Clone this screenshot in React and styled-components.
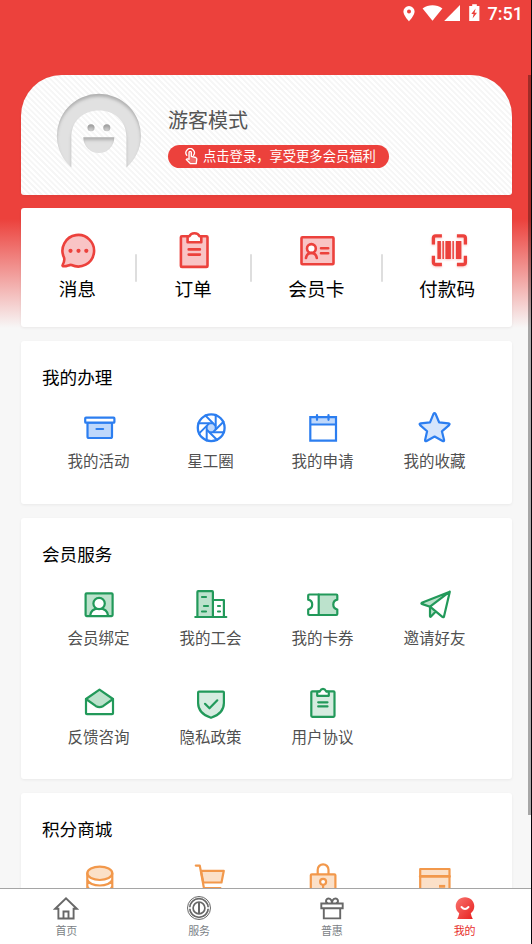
import React from 'react';
import styled, { createGlobalStyle } from 'styled-components';

const RED = '#ec413c';
const PINK = '#f9c4c5';
const BLUE = '#2c7ef0';
const GREEN = '#22995a';
const ORANGE = '#f2984b';

const QUICK_DATA = [
  { title: '消息', icon: <MessageIcon /> },
  { title: '订单', icon: <OrderIcon /> },
  { title: '会员卡', icon: <MemberCardIcon /> },
  { title: '付款码', icon: <PayCodeIcon /> },
];

const SECTION_DATA = [
  {
    title: '我的办理',
    color: BLUE,
    height: 163,
    items: [
      { title: '我的活动', icon: <BoxIcon /> },
      { title: '星工圈', icon: <ApertureIcon /> },
      { title: '我的申请', icon: <CalendarIcon /> },
      { title: '我的收藏', icon: <StarIcon /> },
    ],
  },
  {
    title: '会员服务',
    color: GREEN,
    height: 261.4,
    items: [
      { title: '会员绑定', icon: <PortraitIcon /> },
      { title: '我的工会', icon: <BuildingIcon /> },
      { title: '我的卡券', icon: <TicketIcon /> },
      { title: '邀请好友', icon: <PlaneIcon /> },
      { title: '反馈咨询', icon: <MailIcon /> },
      { title: '隐私政策', icon: <ShieldIcon /> },
      { title: '用户协议', icon: <ClipboardIcon /> },
    ],
  },
  {
    title: '积分商城',
    color: ORANGE,
    height: 163,
    items: [
      { title: '', icon: <CoinsIcon /> },
      { title: '', icon: <CartIcon /> },
      { title: '', icon: <LockIcon /> },
      { title: '', icon: <WalletIcon /> },
    ],
  },
];

const TAB_DATA = [
  { title: '首页', icon: <HomeIcon /> },
  { title: '服务', icon: <ServiceIcon /> },
  { title: '普惠', icon: <GiftIcon /> },
  { title: '我的', icon: <MineIcon />, active: true },
];

export default function App() {
  return (
    <Screen>
      <GlobalStyle />
      <StatusBar>
        <StatusIcons />
        <Clock>7:51</Clock>
      </StatusBar>
      <Content>
        <ProfileCard>
          <Avatar />
          <ProfileInfo>
            <UserName>游客模式</UserName>
            <LoginButton>
              <TapIcon />
              <LoginText>点击登录，享受更多会员福利</LoginText>
            </LoginButton>
          </ProfileInfo>
        </ProfileCard>
        <QuickCard>
          {QUICK_DATA.map((item, i) => (
            <React.Fragment key={item.title}>
              {i > 0 && <Divider />}
              <QuickItem>
                {item.icon}
                <QuickLabel>{item.title}</QuickLabel>
              </QuickItem>
            </React.Fragment>
          ))}
        </QuickCard>
        {SECTION_DATA.map((section) => (
          <SectionCard key={section.title} $height={section.height}>
            <SectionTitle>{section.title}</SectionTitle>
            <ItemGrid $color={section.color}>
              {section.items.map((item, i) => (
                <GridItem key={i}>
                  {item.icon}
                  <ItemLabel>{item.title}</ItemLabel>
                </GridItem>
              ))}
            </ItemGrid>
          </SectionCard>
        ))}
      </Content>
      <ScrollThumb />
      <TabBar>
        {TAB_DATA.map((tab) => (
          <Tab key={tab.title} $active={tab.active}>
            {tab.icon}
            <TabLabel>{tab.title}</TabLabel>
          </Tab>
        ))}
      </TabBar>
    </Screen>
  );
}

function StatusIcons() {
  return (
    <svg width="82" height="20" viewBox="402 3 82 20" fill="#fff">
      <path fillRule="evenodd" d="M409 6a5.6 5.6 0 0 0-5.6 5.6c0 4 5.6 9.8 5.6 9.8s5.6-5.8 5.6-9.8A5.6 5.6 0 0 0 409 6zm0 3.6a2 2 0 1 1 0 4 2 2 0 0 1 0-4z" />
      <path d="M422.6 8.6c5.7-4.4 14.1-4.4 19.8 0L432.5 20.8z" />
      <path d="M444.2 21L460 5v16z" />
      <path fillRule="evenodd" d="M472.2 4.3h4.6V6h2.6v15h-10.2V6h3zM475.6 8.5l-4.3 5.5h2.3l-1 4.5 4.4-5.8h-2.4z" />
    </svg>
  );
}

function Avatar() {
  return (
    <AvatarSvg viewBox="0 0 88 80">
      <defs>
        <filter id="inset" x="-10%" y="-10%" width="120%" height="120%">
          <feOffset in="SourceAlpha" dy="2.5" />
          <feGaussianBlur stdDeviation="1.8" result="b" />
          <feComposite in="SourceAlpha" in2="b" operator="out" result="s" />
          <feFlood floodColor="#000" floodOpacity=".42" />
          <feComposite in2="s" operator="in" result="sh" />
          <feMerge>
            <feMergeNode in="SourceGraphic" />
            <feMergeNode in="sh" />
          </feMerge>
        </filter>
      </defs>
      <g fill="#e1e1e1" filter="url(#inset)">
        <path d="M16.3 75.500A42 42 0 1 1 71.500 75.500V45C71.200 28 59 18.500 44 18.500S16.500 28 16.300 45Z" />
        <circle cx="36" cy="35.700" r="3.500" fill="#ccc" />
        <circle cx="51.800" cy="35.700" r="3.500" fill="#ccc" />
        <path d="M28.300 45.300h31a15.500 15.800 0 0 1-31 0z" />
      </g>
    </AvatarSvg>
  );
}

function TapIcon() {
  return (
    <svg width="15" height="17" viewBox="0 0 15 17" fill="none" stroke="#fff" strokeWidth="1.3" strokeLinejoin="round" strokeLinecap="round">
      <path d="M2.800 7.300a4.200 4.200 0 1 1 6.700 0" />
      <path d="M5 10.500V4.600a1.200 1.200 0 0 1 2.400 0v3.700l4.300 1.200c.9.300 1.200.9 1.100 1.700l-.6 4.500H6.500L2.300 11.600c.5-1 1.500-1 2.700-.3z" fill="rgba(255,255,255,.25)" />
    </svg>
  );
}

function MessageIcon() {
  return (
    <QuickSvg viewBox="0 0 42 42">
      <path d="M7 27.500A15.800 15.800 0 1 1 14.500 35C12.500 34.300 9.500 37 6 36.200c-.6-.2-.6-.8-.3-1.300C7 32.500 7.800 30 7 27.500z" fill={PINK} />
      <g fill={RED} stroke="none">
        <circle cx="13.500" cy="20.800" r="2.100" />
        <circle cx="21.500" cy="20.800" r="2.100" />
        <circle cx="29.300" cy="20.800" r="2.100" />
      </g>
    </QuickSvg>
  );
}

function OrderIcon() {
  return (
    <QuickSvg viewBox="0 0 42 42">
      <rect x="7.900" y="6.300" width="26.600" height="30.600" rx="1" fill={PINK} />
      <path d="M14.600 6.300h1.800c1.600-4 8.500-4 10.100 0h1.800v5.900H14.600z" fill="#fff" />
      <path d="M15.700 19.400h11.200M15.700 24.600h11.200" />
    </QuickSvg>
  );
}

function MemberCardIcon() {
  return (
    <QuickSvg viewBox="0.800 0 42 42">
      <rect x="6.300" y="7.300" width="32" height="27" rx="1" fill={PINK} />
      <circle cx="16.200" cy="18.500" r="4.400" fill="#fff" />
      <path d="M10.800 28c.5-3.200 2-5 5.400-5s4.900 1.800 5.400 5M25.800 18.200h7.200M25.800 23.300h7.200" />
    </QuickSvg>
  );
}

function PayCodeIcon() {
  return (
    <QuickSvg viewBox="0.600 0 42 42" $shadow>
      <path d="M15.500 5.800H9.200Q7 5.800 7 8v6.500M30.500 5.800h6.300Q39 5.800 39 8v6.500M15.500 34.500H9.200Q7 34.500 7 32.300v-6.500M30.500 34.500h6.300q2.200 0 2.200-2.200v-6.500" strokeWidth="3.300" strokeLinecap="butt" />
      <path d="M11 11h3.500v18H11zM16 11h1.500v18H16zM19 11h5.500v18H19zM26 11h1.500v18H26zM29.500 11H35v18h-5.500z" fill={RED} stroke="none" />
    </QuickSvg>
  );
}

function BoxIcon() {
  return (
    <ItemSvg viewBox="0 0 36 36">
      <path d="M6.500 13.500v14q0 1.500 1.500 1.500h21.500q1.500 0 1.500-1.500v-14z" fill="#bfd8fb" />
      <rect x="4.200" y="8.700" width="29.200" height="5" rx=".8" fill="#fff" />
      <path d="M15.500 20h6.600" />
    </ItemSvg>
  );
}

function ApertureIcon() {
  return (
    <ItemSvg viewBox="0 0 36 36">
      <circle cx="18.200" cy="18.700" r="13.400" strokeWidth="2.300" />
      <circle cx="18.200" cy="18.700" r="4" fill="#bfd8fb" stroke="none" />
      {[0, 45, 90, 135, 180, 225, 270, 315].map((deg) => (
        <path key={deg} d="M22.700 5.800V20" transform={`rotate(${deg} 18.200 18.700)`} strokeWidth="2" />
      ))}
    </ItemSvg>
  );
}

function CalendarIcon() {
  return (
    <ItemSvg viewBox="0 0 36 36">
      <path d="M5.300 8.200h25.700v7.300H5.300z" fill="#bfd8fb" stroke="none" />
      <path d="M5.300 8.200h25.700v23.500H5.300zM5.300 15.500h25.700M12 6v4.800M23.500 6v4.800" strokeLinejoin="miter" />
    </ItemSvg>
  );
}

function StarIcon() {
  return (
    <ItemSvg viewBox="0 0 36 36">
      <path d="M16.500 4.800q1-1.600 2 0l3.600 8.500 9.300 1q2 .4.700 1.800l-7.200 6.200 2.200 8.700q.2 1.800-1.500 1l-8-4.500-8 4.500q-1.700.8-1.500-1l2-8.700-7-6.200q-1.300-1.400.7-1.800l9.200-1z" fill="#d5e5fc" />
    </ItemSvg>
  );
}

function PortraitIcon() {
  return (
    <ItemSvg viewBox="0 0 36 36">
      <rect x="4.600" y="7.300" width="27" height="22.800" rx="1" fill="#bce2cc" />
      <path d="M9 30c.5-5 3.500-7.700 9.100-7.700s8.600 2.700 9.100 7.700z" fill="#fff" />
      <circle cx="18.100" cy="17.500" r="5.700" fill="#fff" />
    </ItemSvg>
  );
}

function BuildingIcon() {
  return (
    <ItemSvg viewBox="0 0 36 36">
      <rect x="4.400" y="5.200" width="15.500" height="25.800" rx=".8" fill="#bce2cc" />
      <path d="M19.900 14h11v17M2.300 31h31M9 11h4M11 20h4M9 25.500h4M25 20h2M25 25.500h2" />
    </ItemSvg>
  );
}

function TicketIcon() {
  return (
    <ItemSvg viewBox="0 0 36 36">
      <path d="M13.700 8.500h17.600q1 0 1 1v4.200a5 5 0 0 0 0 9.800v4.500q0 1-1 1H13.700z" fill="#bce2cc" />
      <path d="M13.700 8.500H4.200q-1 0-1 1v4.200a5 5 0 0 1 0 9.800v4.500q0 1 1 1h9.500" />
    </ItemSvg>
  );
}

function PlaneIcon() {
  return (
    <ItemSvg viewBox="0 0 36 36">
      <path d="M32.800 5.500L4.500 17q-.6.600.3 1l8.200 2.700v9.200q.1 1.600 1 .7l4.400-4.400-5.400-5z" fill="#bce2cc" stroke="none" />
      <path d="M32.800 5.700L4.800 16.800q-.8.600 0 1.100l8.200 2.800v9.300q.2 1.300 1 .5l4.300-4.400M32.800 5.700L13 20.700l12.700 10.400q1 .4 1.300-.5z" />
    </ItemSvg>
  );
}

function MailIcon() {
  return (
    <ItemSvg viewBox="0 0 36 36">
      <path d="M5 14L18.500 4.700 32 14 22 21.200q-3.500 1.800-7 0z" fill="#bce2cc" />
      <path d="M5 14v14.200q0 1 1 1h25q1 0 1-1V14" />
    </ItemSvg>
  );
}

function ShieldIcon() {
  return (
    <ItemSvg viewBox="0 0 36 36">
      <path d="M6 6.700h24q.9 0 .9.900V18q0 10.500-12.900 14.800Q5.100 28.500 5.100 18V7.600q0-.9.900-.9z" fill="#d6ece0" />
      <path d="M12 18.800l4.500 4.500 7.800-8" />
    </ItemSvg>
  );
}

function ClipboardIcon() {
  return (
    <ItemSvg viewBox="0 0 36 36">
      <rect x="6.300" y="6.300" width="23.200" height="25.500" rx="1" fill="#d6ece0" />
      <path d="M12.200 10.800V7.700q0-1 1-1h1.300q3.500-5.800 7 0h1.300q1 0 1 1v3.100z" fill="#fff" />
      <path d="M13.200 17.300h9.300M13.200 21.400h9.300" />
    </ItemSvg>
  );
}

function CoinsIcon() {
  return (
    <ItemSvg viewBox="0 0 36 36">
      <ellipse cx="18.800" cy="12.300" rx="12.500" ry="6.700" fill="#fbe0c8" />
      <path d="M6.300 12.300V34M31.300 12.300V34M6.300 18.500c2 8 23 8 25 0M6.300 25c2 8 23 8 25 0" />
    </ItemSvg>
  );
}

function CartIcon() {
  return (
    <ItemSvg viewBox="0 0 36 36">
      <path d="M8 9.800h22.800L28.500 21.500H10.300z" fill="#fbe0c8" />
      <path d="M2.800 4.600h4L10.900 27h16.500" />
    </ItemSvg>
  );
}

function LockIcon() {
  return (
    <ItemSvg viewBox="0 0 36 36">
      <rect x="5.800" y="13.300" width="24.600" height="22" rx="1" fill="#fbe0c8" />
      <path d="M12.700 13V8.700a5.400 5.400 0 0 1 10.800 0V13M18.100 24v6" />
      <circle cx="18.100" cy="20.800" r="3" fill="#fff" />
    </ItemSvg>
  );
}

function WalletIcon() {
  return (
    <ItemSvg viewBox="0 0 36 36">
      <path d="M3.200 8h29.300v28H3.200z" fill="#fbe0c8" />
      <path d="M3.200 15.400h29.300" strokeWidth="2.600" />
      <path d="M22 25.300h6.200" strokeWidth="2.800" strokeLinecap="butt" />
    </ItemSvg>
  );
}

function HomeIcon() {
  return (
    <TabSvg viewBox="0 0 26 26">
      <path d="M2.200 13.700L13 3.300l10.800 10.400h-3.200v9.800H5.400v-9.800zM10.500 23.500v-7h5v7" />
    </TabSvg>
  );
}

function ServiceIcon() {
  return (
    <TabSvg viewBox="0 0 26 26">
      <circle cx="13" cy="13" r="11.500" strokeWidth="1" />
      <circle cx="13" cy="13" r="9.300" strokeWidth="1.700" />
      <circle cx="13" cy="13" r="5.900" strokeWidth="1.700" />
      <path d="M13 7v12" strokeWidth="2" />
      <path d="M2.500 13H6M20 13h3.500" stroke="#fff" strokeWidth="1.300" />
    </TabSvg>
  );
}

function GiftIcon() {
  return (
    <TabSvg viewBox="0 0 26 26">
      <path d="M2.300 8.500h21.400v4.700H2.300zM4.800 13.200h16.400v10.200H4.800zM13 8.500H9q-2.600-1-1.800-3.500 1.200-2.200 3.700-1.200Q13 5 13 8.500zM13 8.500h4q2.600-1 1.800-3.500-1.200-2.200-3.700-1.200Q13 5 13 8.500z" />
    </TabSvg>
  );
}

function MineIcon() {
  return (
    <TabSvg viewBox="0 0 26 26">
      <defs>
        <linearGradient id="mine" x1="0" y1="0" x2="1" y2="1">
          <stop offset="0" stopColor="#f9736e" />
          <stop offset="1" stopColor="#e7211f" />
        </linearGradient>
      </defs>
      <path d="M13 2.200c5.300 0 9.300 3.900 9.300 9 0 3-1.300 5.300-3.500 7 .3 2 1 4 2 5.800H5.200c1-1.800 1.700-3.800 2-5.800-2.200-1.700-3.500-4-3.500-7 0-5.100 4-9 9.300-9z" fill="url(#mine)" stroke="none" />
      <path d="M9.500 12q3.500 4 7 0" stroke="#fff" strokeLinecap="round" />
    </TabSvg>
  );
}

const GlobalStyle = createGlobalStyle`
  * {
    box-sizing: border-box;
  }

  body {
    margin: 0;
    font-family: 'Noto Sans CJK SC', sans-serif;
    font-weight: 400;
  }
`;

const Screen = styled.div`
  position: relative;
  display: flex;
  flex-direction: column;
  width: 532px;
  height: 944px;
  overflow: hidden;
  border-right: 1px solid #05050a;
  background: linear-gradient(${RED} 219px, #f7f7f7 328px);
`;

const StatusBar = styled.header`
  flex: none;
  display: flex;
  align-items: flex-start;
  justify-content: flex-end;
  gap: 4px;
  height: 75px;
  padding: 3px 8px 0 0;
`;

const Clock = styled.span`
  font: 500 18px/22px Roboto, sans-serif;
  color: #fff;
`;

const Content = styled.main`
  flex: 1;
  min-height: 0;
  overflow: hidden;
  display: flex;
  flex-direction: column;
  gap: 14px;
  padding: 0 19px 0 21px;
`;

const Card = styled.section`
  flex: none;
  background: #fff;
  border-radius: 3px;
  box-shadow: 0 1px 3px rgba(0, 0, 0, 0.06);
`;

const ProfileCard = styled(Card)`
  display: flex;
  height: 119.5px;
  margin-bottom: -0.5px;
  padding: 17px 0 0 34px;
  border-radius: 41px 41px 3px 3px;
  background: repeating-linear-gradient(45deg, #fff 0 1.6px, #f6f6f6 2.2px 3.6px, #fff 4px);
`;

const AvatarSvg = styled.svg`
  width: 88px;
  height: 80px;
`;

const ProfileInfo = styled.div`
  display: flex;
  flex-direction: column;
  align-items: flex-start;
  margin-left: 25px;
  padding-top: 13px;
`;

const UserName = styled.div`
  font-size: 20px;
  line-height: 30px;
  color: #555;
`;

const LoginButton = styled.button`
  display: flex;
  align-items: center;
  gap: 4px;
  width: 221px;
  height: 23px;
  margin-top: 10px;
  padding: 0 0 0 16px;
  border: 0;
  border-radius: 12px;
  background: ${RED};
  color: #fff;
  font: inherit;
`;

const LoginText = styled.span`
  font-size: 13.3px;
  line-height: 20px;
  padding-bottom: 1px;
  white-space: nowrap;
`;

const QuickCard = styled(Card)`
  display: flex;
  justify-content: space-evenly;
  height: 119px;
  padding-top: 22px;
`;

const QuickItem = styled.div`
  display: flex;
  flex-direction: column;
  align-items: center;
`;

const QuickSvg = styled.svg`
  width: 42px;
  height: 42px;
  fill: none;
  stroke: ${RED};
  stroke-width: 2.6;
  stroke-linecap: round;
  stroke-linejoin: round;
  filter: ${({ $shadow }) => ($shadow ? 'drop-shadow(0 1px 1px rgba(236, 65, 60, 0.3))' : 'none')};
`;

const QuickLabel = styled.span`
  margin: 2px 1px 0 0;
  font-size: 18.7px;
  line-height: 28px;
  color: #000;
`;

const Divider = styled.i`
  width: 2px;
  height: 28px;
  margin-top: 24px;
  border-radius: 1px;
  background: #dedede;
`;

const SectionCard = styled(Card)`
  height: ${({ $height }) => $height}px;
  padding: 23px 21px 0 22px;
`;

const SectionTitle = styled.h2`
  margin: 0 0 0 -1px;
  font-size: 17.6px;
  font-weight: inherit;
  line-height: 26px;
  color: #000;
`;

const ItemGrid = styled.div`
  display: grid;
  grid-template-columns: repeat(4, 112px);
  grid-auto-rows: 98.6px;
  margin-top: 19px;
  color: ${({ $color }) => $color};
`;

const GridItem = styled.div`
  display: flex;
  flex-direction: column;
  align-items: center;
`;

const ItemSvg = styled.svg`
  width: 36px;
  height: 36px;
  fill: none;
  stroke: currentColor;
  stroke-width: 2.2;
  stroke-linecap: round;
  stroke-linejoin: round;
`;

const ItemLabel = styled.span`
  margin: 4px 1px 0 0;
  font-size: 15.5px;
  line-height: 23px;
  color: #505050;
`;

const ScrollThumb = styled.div`
  position: absolute;
  top: 75px;
  right: 0;
  width: 3px;
  height: 740px;
  background: rgba(0, 0, 0, 0.32);
`;

const TabBar = styled.nav`
  flex: none;
  display: flex;
  height: 56px;
  border-top: 1px solid #a5a5a5;
  background: #fff;
`;

const Tab = styled.a`
  flex: 1;
  display: flex;
  flex-direction: column;
  align-items: center;
  padding-top: 6px;
  color: ${({ $active }) => ($active ? '#e8302d' : '#7b7f86')};
`;

const TabSvg = styled.svg`
  width: 26px;
  height: 26px;
  fill: none;
  stroke: #686868;
  stroke-width: 1.9;
`;

const TabLabel = styled.span`
  font-size: 11px;
  line-height: 18px;
`;
